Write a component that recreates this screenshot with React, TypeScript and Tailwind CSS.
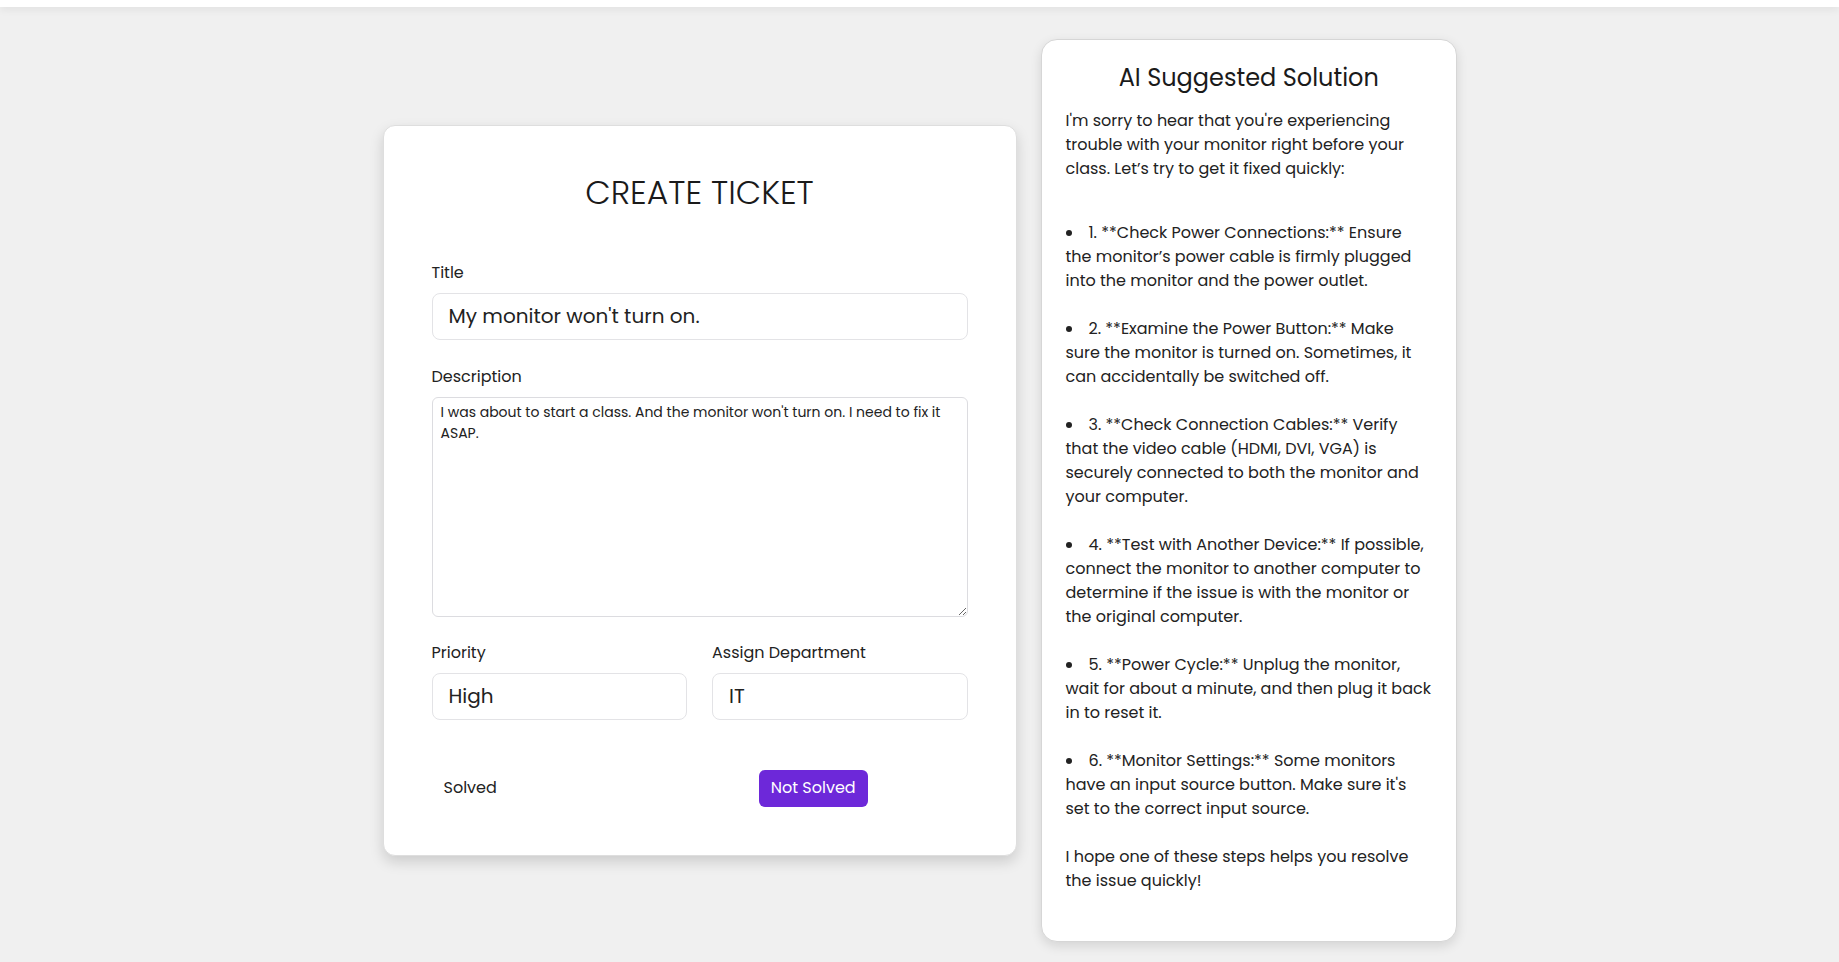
import React from 'react';

const font = "font-['Poppins','Open_Sans',sans-serif]";

const steps = [
    '1. **Check Power Connections:** Ensure the monitor’s power cable is firmly plugged into the monitor and the power outlet.',
    '2. **Examine the Power Button:** Make sure the monitor is turned on. Sometimes, it can accidentally be switched off.',
    '3. **Check Connection Cables:** Verify that the video cable (HDMI, DVI, VGA) is securely connected to both the monitor and your computer.',
    '4. **Test with Another Device:** If possible, connect the monitor to another computer to determine if the issue is with the monitor or the original computer.',
    '5. **Power Cycle:** Unplug the monitor, wait for about a minute, and then plug it back in to reset it.',
    "6. **Monitor Settings:** Some monitors have an input source button. Make sure it's set to the correct input source.",
];

const Label: React.FC<{ children: React.ReactNode }> = ({ children }) => (
    <label className="block text-base leading-6 text-[#222] mb-2">{children}</label>
);

const CreateTicket: React.FC = () => (
    <div className="w-[634px] bg-white rounded-xl border border-[#dedede] shadow-[0_6px_14px_rgba(0,0,0,0.15)] px-12 pt-[47px] pb-12">
        <h1 className="text-center text-[33px] leading-10 font-light text-[#1a1a1a]">CREATE TICKET</h1>

        <div className="mt-[48px]">
            <Label>Title</Label>
            <input
                readOnly
                value="My monitor won't turn on."
                className="w-full h-[47px] rounded-lg border border-[#e3e3e6] px-4 text-xl text-[#222] outline-none"
            />
        </div>

        <div className="mt-[25px]">
            <Label>Description</Label>
            <textarea
                readOnly
                value="I was about to start a class. And the monitor won't turn on. I need to fix it ASAP."
                className="block w-full h-[220px] rounded-md border border-[#dcdce0] px-2 py-1 text-[14px] leading-[21px] text-[#222] outline-none"
            />
        </div>

        <div className="mt-6 grid grid-cols-2 gap-[25px]">
            <div>
                <Label>Priority</Label>
                <input
                    readOnly
                    value="High"
                    className="w-full h-[47px] rounded-lg border border-[#e3e3e6] px-4 text-xl text-[#222] outline-none"
                />
            </div>
            <div>
                <Label>Assign Department</Label>
                <input
                    readOnly
                    value="IT"
                    className="w-full h-[47px] rounded-lg border border-[#e3e3e6] px-4 text-xl text-[#222] outline-none"
                />
            </div>
        </div>

        <div className="mt-[50px] flex items-center gap-[250px]">
            <button className="h-[37px] px-3 text-base text-[#222]">Solved</button>
            <button className="h-[37px] px-3 rounded-md bg-[#6d28d9] text-base text-white">Not Solved</button>
        </div>
    </div>
);

const Suggestion: React.FC = () => (
    <div className="w-[416px] bg-white rounded-2xl border border-[#d6d6d6] shadow-[0_4px_12px_rgba(0,0,0,0.12)] pl-6 pr-[23.5px] pt-[22px] pb-12 text-base leading-6 text-[#222]">
        <h2 className="text-center text-[24px] leading-8 text-[#1a1a1a] mb-[15px]">AI Suggested Solution</h2>
        <p>I'm sorry to hear that you're experiencing trouble with your monitor right before your class. Let’s try to get it fixed quickly:</p>
        <ul className="mt-10 list-disc list-inside space-y-6">
            {steps.map((s, i) => (
                <li key={i}>{s}</li>
            ))}
        </ul>
        <p className="mt-6">I hope one of these steps helps you resolve the issue quickly!</p>
    </div>
);

export default function App() {
    return (
        <div className={`min-h-screen bg-[#f0f0f0] ${font}`}>
            <div className="h-[7px] bg-white shadow-[0_2px_8px_rgba(0,0,0,0.08)]" />
            <div className="h-[966px] flex items-center justify-center gap-[24px]">
                <CreateTicket />
                <Suggestion />
            </div>
        </div>
    );
}
